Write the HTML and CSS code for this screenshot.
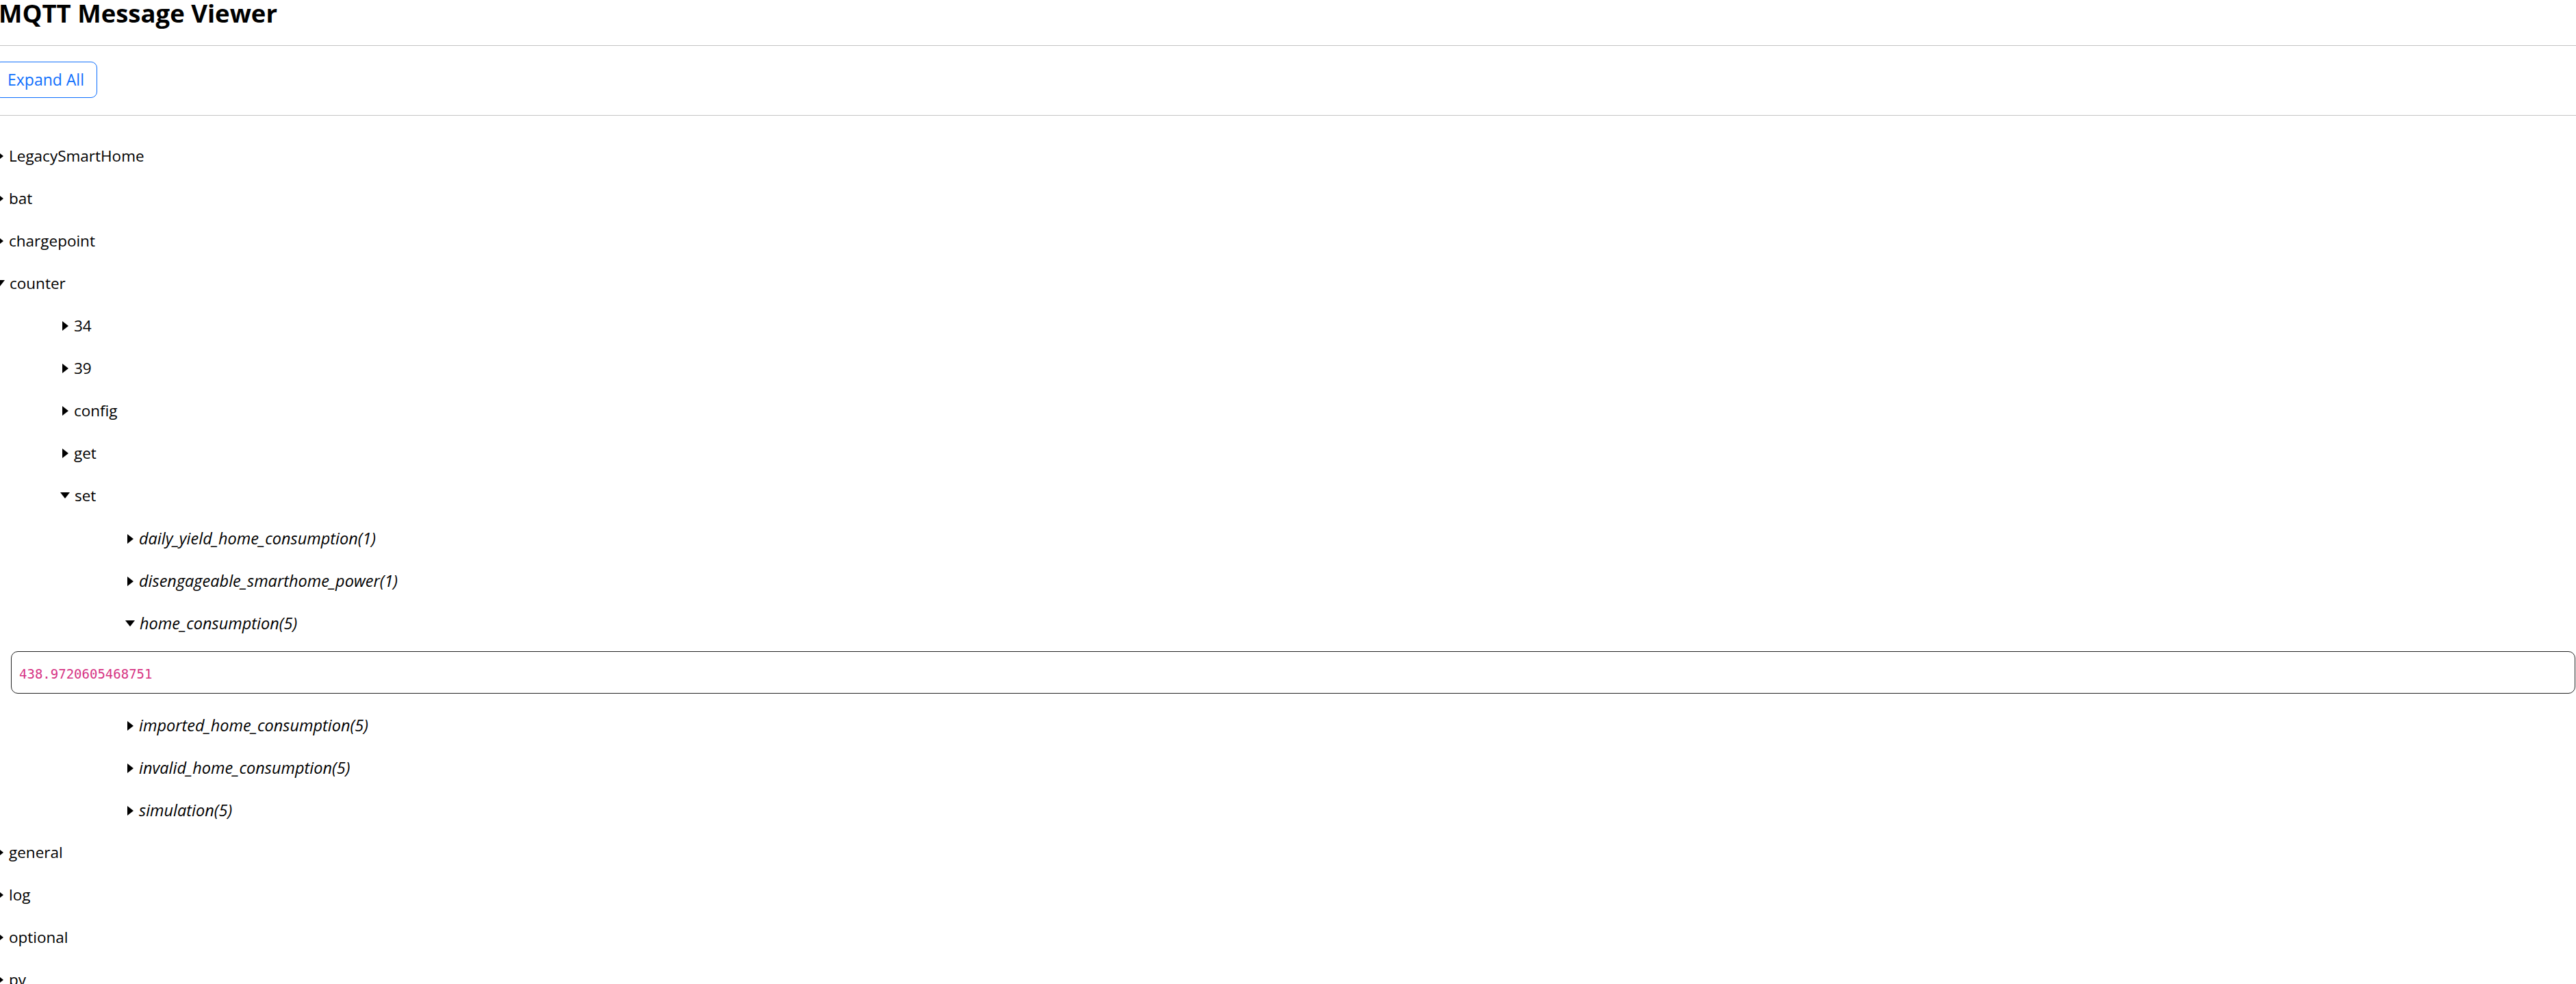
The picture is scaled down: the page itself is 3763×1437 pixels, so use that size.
FILE: index.html
```html
<!DOCTYPE html>
<html lang="en">
<head>
<meta charset="utf-8">
<title>MQTT Message Viewer</title>
<link rel="stylesheet" href="styles.css">
</head>
<body>
<div class="page">
  <h1 class="title">MQTT Message Viewer</h1>
  <hr class="rule rule-top">
  <div class="toolbar">
    <button class="btn-outline" type="button">Expand All</button>
  </div>
  <hr class="rule rule-bottom">
  <div class="tree">
    <details class="row lvl-0"><summary class="label">LegacySmartHome</summary></details>
    <details class="row lvl-0"><summary class="label">bat</summary></details>
    <details class="row lvl-0"><summary class="label">chargepoint</summary></details>
    <details class="row lvl-0" open><summary class="label">counter</summary></details>
    <details class="row lvl-1"><summary class="label">34</summary></details>
    <details class="row lvl-1"><summary class="label">39</summary></details>
    <details class="row lvl-1"><summary class="label">config</summary></details>
    <details class="row lvl-1"><summary class="label">get</summary></details>
    <details class="row lvl-1" open><summary class="label">set</summary></details>
    <details class="row lvl-2"><summary class="label topic">daily_yield_home_consumption(1)</summary></details>
    <details class="row lvl-2"><summary class="label topic">disengageable_smarthome_power(1)</summary></details>
    <details class="row lvl-2" open><summary class="label topic">home_consumption(5)</summary></details>
    <pre class="message"><code class="payload">438.9720605468751</code></pre>
    <details class="row lvl-2"><summary class="label topic">imported_home_consumption(5)</summary></details>
    <details class="row lvl-2"><summary class="label topic">invalid_home_consumption(5)</summary></details>
    <details class="row lvl-2"><summary class="label topic">simulation(5)</summary></details>
    <details class="row lvl-0"><summary class="label">general</summary></details>
    <details class="row lvl-0"><summary class="label">log</summary></details>
    <details class="row lvl-0"><summary class="label">optional</summary></details>
    <details class="row lvl-0"><summary class="label">pv</summary></details>
  </div>
</div>
</body>
</html>
```
FILE: styles.css
```css
html, body {
  margin: 0;
  padding: 0;
  background: #fff;
  overflow: hidden;
}

body {
  font-family: "Open Sans", "Noto Sans", "Liberation Sans", sans-serif;
  color: #000;
}

.page {
  margin-left: -8px;
}

.title {
  margin: -1px 0 0 6px;
  font-size: 36.5px;
  line-height: 40px;
  font-weight: 700;
  letter-spacing: 0;
}

.rule {
  border: 0;
  border-top: 1px solid #c4c4c4;
  margin: 0;
  height: 0;
}

.rule-top {
  margin-top: 27px;
}

.toolbar {
  padding: 23px 0 25px 0;
}

.btn-outline {
  font-family: "Open Sans", "Noto Sans", "Liberation Sans", sans-serif;
  font-size: 23px;
  line-height: 33px;
  padding: 9px 18px 9px 18px;
  color: #0d6efd;
  background: #fff;
  border: 1px solid #0d6efd;
  border-radius: 9px;
  display: block;
}

.tree {
  padding-top: 28px;
  padding-left: 4px;
}

.row {
  display: block;
}

.label {
  display: block;
  list-style: none;
  font-size: 22.5px;
  line-height: 36px;
  padding: 13px 0;
  cursor: pointer;
}

.label::-webkit-details-marker {
  display: none;
}

.label::before {
  content: "";
  display: inline-block;
  width: 0;
  height: 0;
  border-left: 9px solid #000;
  border-top: 7px solid transparent;
  border-bottom: 7px solid transparent;
  margin: 0 8px 1px 0;
  vertical-align: baseline;
}

.row[open] > .label::before {
  border-left: 7.5px solid transparent;
  border-right: 7.5px solid transparent;
  border-top: 9px solid #000;
  border-bottom: 0;
  margin: 0 7px 4px -3px;
}

.topic {
  font-style: italic;
  font-size: 23.5px;
}

.lvl-0 {
  padding-left: 0;
}

.lvl-1 {
  padding-left: 95px;
}

.lvl-2 {
  padding-left: 190px;
}

.message {
  margin: 10px 1px 15px 20px;
  padding: 18px 11px 14px 11px;
  border: 1px solid #222;
  border-radius: 10px;
  font-family: "DejaVu Sans Mono", "Liberation Mono", monospace;
  font-size: 19px;
  line-height: 28px;
}

.payload {
  font-family: inherit;
  color: #d63384;
}
```
